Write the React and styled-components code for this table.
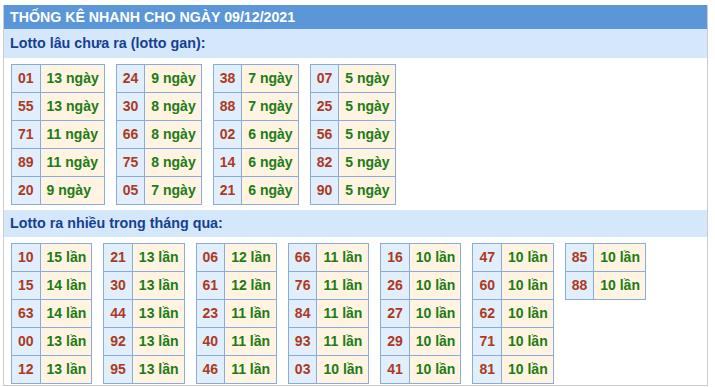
import React from "react";
import styled, { createGlobalStyle } from "styled-components";

const Global = createGlobalStyle`
  html, body { margin: 0; padding: 0; background: #ffffff; }
  body { font-family: "Liberation Sans", Arial, sans-serif; }
`;

const Box = styled.div`
  margin: 5px 0 0 3px;
  width: 703px;
  border: 1px solid #c9ccd2;
  border-top: none;
  background: #fff;
`;

const Title = styled.div`
  height: 24px;
  line-height: 24px;
  background: #5b97d8;
  color: #ffffff;
  font-weight: bold;
  font-size: 14.2px;
  padding-left: 6px;
  text-transform: uppercase;
`;

const SubTitle = styled.div`
  height: ${(p) => p.$h}px;
  line-height: ${(p) => p.$h}px;
  background: #d5e7fb;
  color: #163f94;
  font-weight: bold;
  font-size: 14.3px;
  padding-left: 6px;
`;

const Tables = styled.div`
  display: flex;
  align-items: flex-start;
  gap: 11px;
  padding: 6px 7px 0;
  margin-bottom: ${(p) => p.$mb}px;
`;

const Grid = styled.div`
  display: grid;
  grid-template-columns: auto auto;
  border-left: 1px solid #8aabdd;
  border-top: 1px solid #8aabdd;
`;

const Cell = styled.div`
  height: 27px;
  line-height: 27px;
  font-size: 14px;
  font-weight: bold;
  border-right: 1px solid #8aabdd;
  border-bottom: 1px solid #8aabdd;
  white-space: nowrap;
`;

const Num = styled(Cell)`
  padding: 0 6px;
  background: #e1eefc;
  color: #ad3a1e;
`;

const Val = styled(Cell)`
  padding: 0 5px 0 6px;
  background: #fff3e2;
  color: #207c14;
`;

const gan = [
  [["01", 13], ["55", 13], ["71", 11], ["89", 11], ["20", 9]],
  [["24", 9], ["30", 8], ["66", 8], ["75", 8], ["05", 7]],
  [["38", 7], ["88", 7], ["02", 6], ["14", 6], ["21", 6]],
  [["07", 5], ["25", 5], ["56", 5], ["82", 5], ["90", 5]],
];

const nhieu = [
  [["10", 15], ["15", 14], ["63", 14], ["00", 13], ["12", 13]],
  [["21", 13], ["30", 13], ["44", 13], ["92", 13], ["95", 13]],
  [["06", 12], ["61", 12], ["23", 11], ["40", 11], ["46", 11]],
  [["66", 11], ["76", 11], ["84", 11], ["93", 11], ["03", 10]],
  [["16", 10], ["26", 10], ["27", 10], ["29", 10], ["41", 10]],
  [["47", 10], ["60", 10], ["62", 10], ["71", 10], ["81", 10]],
  [["85", 10], ["88", 10]],
];

function StatTable({ rows, unit }) {
  return (
    <Grid>
      {rows.map(([n, c]) => (
        <React.Fragment key={n}>
          <Num>{n}</Num>
          <Val>
            {c} {unit}
          </Val>
        </React.Fragment>
      ))}
    </Grid>
  );
}

export default function App() {
  return (
    <>
      <Global />
      <Box>
        <Title>Thống kê nhanh cho ngày 09/12/2021</Title>
        <SubTitle $h={29}>Lotto lâu chưa ra (lotto gan):</SubTitle>
        <Tables $mb={5}>
          {gan.map((rows, i) => (
            <StatTable key={i} rows={rows} unit="ngày" />
          ))}
        </Tables>
        <SubTitle $h={27}>Lotto ra nhiều trong tháng qua:</SubTitle>
        <Tables $mb={1}>
          {nhieu.map((rows, i) => (
            <StatTable key={i} rows={rows} unit="lần" />
          ))}
        </Tables>
      </Box>
    </>
  );
}
